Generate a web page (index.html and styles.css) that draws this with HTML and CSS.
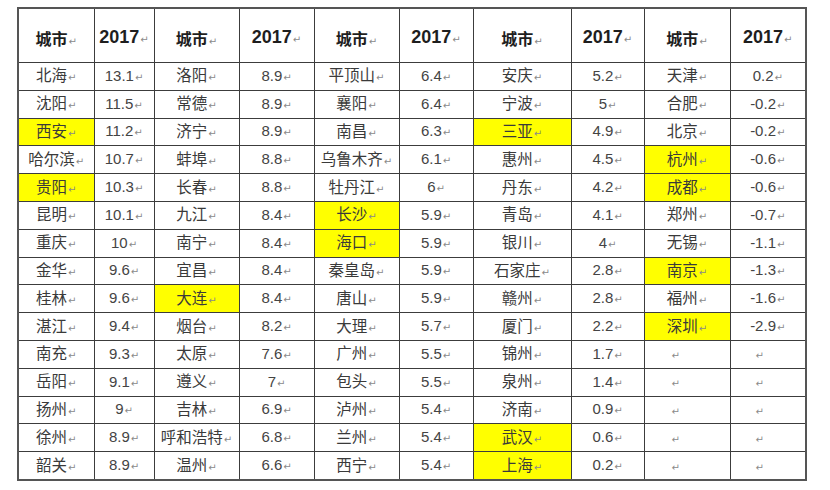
FILE: index.html
```html
<!DOCTYPE html>
<html lang="zh">
<head>
<meta charset="utf-8">
<link rel="stylesheet" href="styles.css">
</head>
<body>
<table class="grid">
<colgroup>
<col class="c1"><col class="c2"><col class="c3"><col class="c4"><col class="c5"><col class="c6"><col class="c7"><col class="c8"><col class="c9"><col class="c10">
</colgroup>
<thead>
<tr class="head">
<th class="cn">城市<span class="pm">↵</span></th><th class="num">2017<span class="pm">↵</span></th>
<th class="cn">城市<span class="pm">↵</span></th><th class="num">2017<span class="pm">↵</span></th>
<th class="cn">城市<span class="pm">↵</span></th><th class="num">2017<span class="pm">↵</span></th>
<th class="cn">城市<span class="pm">↵</span></th><th class="num">2017<span class="pm">↵</span></th>
<th class="cn">城市<span class="pm">↵</span></th><th class="num">2017<span class="pm">↵</span></th>
</tr>
</thead>
<tbody>
<tr><td>北海<span class="pm">↵</span></td><td class="n">13.1<span class="pm">↵</span></td><td>洛阳<span class="pm">↵</span></td><td class="n">8.9<span class="pm">↵</span></td><td>平顶山<span class="pm">↵</span></td><td class="n">6.4<span class="pm">↵</span></td><td>安庆<span class="pm">↵</span></td><td class="n">5.2<span class="pm">↵</span></td><td>天津<span class="pm">↵</span></td><td class="n">0.2<span class="pm">↵</span></td></tr>
<tr><td>沈阳<span class="pm">↵</span></td><td class="n">11.5<span class="pm">↵</span></td><td>常德<span class="pm">↵</span></td><td class="n">8.9<span class="pm">↵</span></td><td>襄阳<span class="pm">↵</span></td><td class="n">6.4<span class="pm">↵</span></td><td>宁波<span class="pm">↵</span></td><td class="n">5<span class="pm">↵</span></td><td>合肥<span class="pm">↵</span></td><td class="n">-0.2<span class="pm">↵</span></td></tr>
<tr><td class="hl">西安<span class="pm">↵</span></td><td class="n">11.2<span class="pm">↵</span></td><td>济宁<span class="pm">↵</span></td><td class="n">8.9<span class="pm">↵</span></td><td>南昌<span class="pm">↵</span></td><td class="n">6.3<span class="pm">↵</span></td><td class="hl">三亚<span class="pm">↵</span></td><td class="n">4.9<span class="pm">↵</span></td><td>北京<span class="pm">↵</span></td><td class="n">-0.2<span class="pm">↵</span></td></tr>
<tr><td>哈尔滨<span class="pm">↵</span></td><td class="n">10.7<span class="pm">↵</span></td><td>蚌埠<span class="pm">↵</span></td><td class="n">8.8<span class="pm">↵</span></td><td>乌鲁木齐<span class="pm">↵</span></td><td class="n">6.1<span class="pm">↵</span></td><td>惠州<span class="pm">↵</span></td><td class="n">4.5<span class="pm">↵</span></td><td class="hl">杭州<span class="pm">↵</span></td><td class="n">-0.6<span class="pm">↵</span></td></tr>
<tr><td class="hl">贵阳<span class="pm">↵</span></td><td class="n">10.3<span class="pm">↵</span></td><td>长春<span class="pm">↵</span></td><td class="n">8.8<span class="pm">↵</span></td><td>牡丹江<span class="pm">↵</span></td><td class="n">6<span class="pm">↵</span></td><td>丹东<span class="pm">↵</span></td><td class="n">4.2<span class="pm">↵</span></td><td class="hl">成都<span class="pm">↵</span></td><td class="n">-0.6<span class="pm">↵</span></td></tr>
<tr><td>昆明<span class="pm">↵</span></td><td class="n">10.1<span class="pm">↵</span></td><td>九江<span class="pm">↵</span></td><td class="n">8.4<span class="pm">↵</span></td><td class="hl">长沙<span class="pm">↵</span></td><td class="n">5.9<span class="pm">↵</span></td><td>青岛<span class="pm">↵</span></td><td class="n">4.1<span class="pm">↵</span></td><td>郑州<span class="pm">↵</span></td><td class="n">-0.7<span class="pm">↵</span></td></tr>
<tr><td>重庆<span class="pm">↵</span></td><td class="n">10<span class="pm">↵</span></td><td>南宁<span class="pm">↵</span></td><td class="n">8.4<span class="pm">↵</span></td><td class="hl">海口<span class="pm">↵</span></td><td class="n">5.9<span class="pm">↵</span></td><td>银川<span class="pm">↵</span></td><td class="n">4<span class="pm">↵</span></td><td>无锡<span class="pm">↵</span></td><td class="n">-1.1<span class="pm">↵</span></td></tr>
<tr><td>金华<span class="pm">↵</span></td><td class="n">9.6<span class="pm">↵</span></td><td>宜昌<span class="pm">↵</span></td><td class="n">8.4<span class="pm">↵</span></td><td>秦皇岛<span class="pm">↵</span></td><td class="n">5.9<span class="pm">↵</span></td><td>石家庄<span class="pm">↵</span></td><td class="n">2.8<span class="pm">↵</span></td><td class="hl">南京<span class="pm">↵</span></td><td class="n">-1.3<span class="pm">↵</span></td></tr>
<tr><td>桂林<span class="pm">↵</span></td><td class="n">9.6<span class="pm">↵</span></td><td class="hl">大连<span class="pm">↵</span></td><td class="n">8.4<span class="pm">↵</span></td><td>唐山<span class="pm">↵</span></td><td class="n">5.9<span class="pm">↵</span></td><td>赣州<span class="pm">↵</span></td><td class="n">2.8<span class="pm">↵</span></td><td>福州<span class="pm">↵</span></td><td class="n">-1.6<span class="pm">↵</span></td></tr>
<tr><td>湛江<span class="pm">↵</span></td><td class="n">9.4<span class="pm">↵</span></td><td>烟台<span class="pm">↵</span></td><td class="n">8.2<span class="pm">↵</span></td><td>大理<span class="pm">↵</span></td><td class="n">5.7<span class="pm">↵</span></td><td>厦门<span class="pm">↵</span></td><td class="n">2.2<span class="pm">↵</span></td><td class="hl">深圳<span class="pm">↵</span></td><td class="n">-2.9<span class="pm">↵</span></td></tr>
<tr><td>南充<span class="pm">↵</span></td><td class="n">9.3<span class="pm">↵</span></td><td>太原<span class="pm">↵</span></td><td class="n">7.6<span class="pm">↵</span></td><td>广州<span class="pm">↵</span></td><td class="n">5.5<span class="pm">↵</span></td><td>锦州<span class="pm">↵</span></td><td class="n">1.7<span class="pm">↵</span></td><td class="e"><span class="pm">↵</span></td><td class="e2"><span class="pm">↵</span></td></tr>
<tr><td>岳阳<span class="pm">↵</span></td><td class="n">9.1<span class="pm">↵</span></td><td>遵义<span class="pm">↵</span></td><td class="n">7<span class="pm">↵</span></td><td>包头<span class="pm">↵</span></td><td class="n">5.5<span class="pm">↵</span></td><td>泉州<span class="pm">↵</span></td><td class="n">1.4<span class="pm">↵</span></td><td class="e"><span class="pm">↵</span></td><td class="e2"><span class="pm">↵</span></td></tr>
<tr><td>扬州<span class="pm">↵</span></td><td class="n">9<span class="pm">↵</span></td><td>吉林<span class="pm">↵</span></td><td class="n">6.9<span class="pm">↵</span></td><td>泸州<span class="pm">↵</span></td><td class="n">5.4<span class="pm">↵</span></td><td>济南<span class="pm">↵</span></td><td class="n">0.9<span class="pm">↵</span></td><td class="e"><span class="pm">↵</span></td><td class="e2"><span class="pm">↵</span></td></tr>
<tr><td>徐州<span class="pm">↵</span></td><td class="n">8.9<span class="pm">↵</span></td><td>呼和浩特<span class="pm">↵</span></td><td class="n">6.8<span class="pm">↵</span></td><td>兰州<span class="pm">↵</span></td><td class="n">5.4<span class="pm">↵</span></td><td class="hl">武汉<span class="pm">↵</span></td><td class="n">0.6<span class="pm">↵</span></td><td class="e"><span class="pm">↵</span></td><td class="e2"><span class="pm">↵</span></td></tr>
<tr><td>韶关<span class="pm">↵</span></td><td class="n">8.9<span class="pm">↵</span></td><td>温州<span class="pm">↵</span></td><td class="n">6.6<span class="pm">↵</span></td><td>西宁<span class="pm">↵</span></td><td class="n">5.4<span class="pm">↵</span></td><td class="hl">上海<span class="pm">↵</span></td><td class="n">0.2<span class="pm">↵</span></td><td class="e"><span class="pm">↵</span></td><td class="e2"><span class="pm">↵</span></td></tr>
</tbody>
</table>
</body>
</html>
```
FILE: styles.css
```css
html, body {
  margin: 0;
  padding: 0;
  background: #ffffff;
}
body {
  padding: 7px 0 0 17px;
  font-family: "Noto Sans CJK SC", "DejaVu Sans", sans-serif;
  color: #3a3a3a;
}
.grid {
  border-collapse: collapse;
  table-layout: fixed;
  width: 788px;
  border: 2px solid #555;
}
.c1 { width: 76px; }
.c2 { width: 60px; }
.c3 { width: 85px; }
.c4 { width: 75px; }
.c5 { width: 85px; }
.c6 { width: 74px; }
.c7 { width: 98px; }
.c8 { width: 73px; }
.c9 { width: 86px; }
.c10 { width: 76px; }
.grid th, .grid td {
  border: 1px solid #3c3c3c;
  padding: 0;
  text-align: center;
  white-space: nowrap;
  overflow: hidden;
}
.grid th {
  height: 49px;
  font-weight: bold;
  color: #1e1e1e;
  padding-top: 4px;
}
.grid th.cn {
  font-size: 16px;
}
.grid th.num {
  font-family: "Liberation Sans", "DejaVu Sans", sans-serif;
  font-size: 18px;
}
.grid td {
  height: 26.8px;
  font-size: 15.5px;
  line-height: 17px;
}
.grid td.n {
  font-family: "Liberation Sans", "DejaVu Sans", sans-serif;
  font-size: 15px;
  color: #444;
}
.grid td.hl {
  background: #ffff00;
}
.grid td.e {
  text-align: left;
  padding-left: 26px;
}
.grid td.e2 {
  text-align: left;
  padding-left: 24px;
}
.pm {
  font-family: "DejaVu Sans", sans-serif;
  font-size: 10px;
  color: #8a8a8a;
  font-weight: normal;
  margin-left: 1px;
}
```
